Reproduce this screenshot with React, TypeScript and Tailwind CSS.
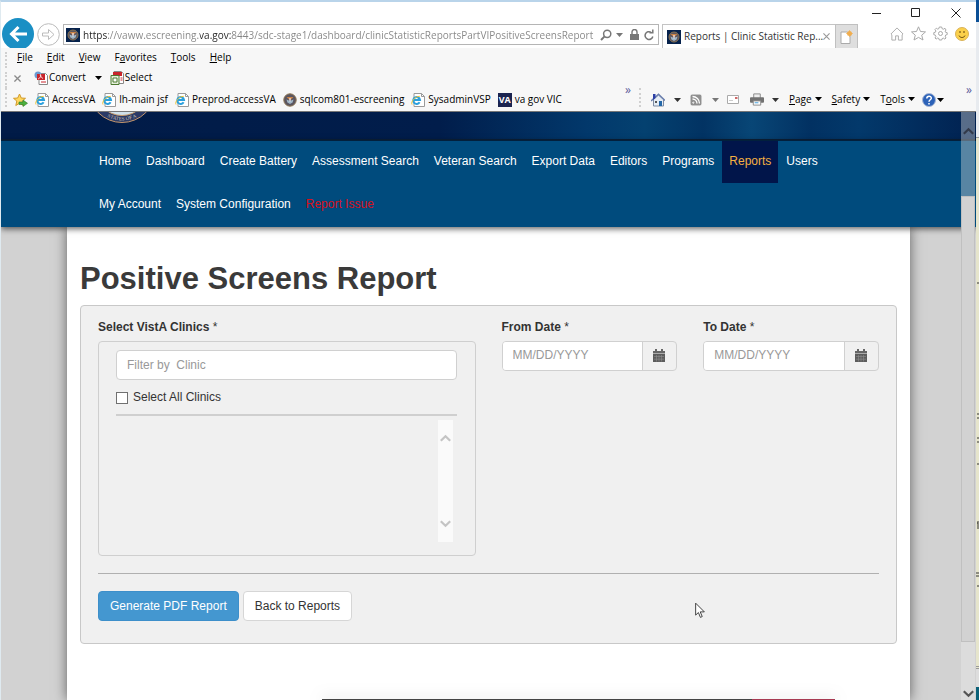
import React from "react";

const NAV_LINKS = [
  "Home",
  "Dashboard",
  "Create Battery",
  "Assessment Search",
  "Veteran Search",
  "Export Data",
  "Editors",
  "Programs",
  "Reports",
  "Users",
  "My Account",
  "System Configuration",
  "Report Issue",
];

function Caret({ className = "" }: { className?: string }) {
  return (
    <svg viewBox="0 0 7 4" className={`h-1 w-[7px] shrink-0 ${className}`} fill="currentColor" aria-hidden="true">
      <path d="M0 0h7L3.5 4z" />
    </svg>
  );
}

function Seal({ square = false }: { square?: boolean }) {
  return (
    <svg viewBox="0 0 14 14" className="size-[14px] shrink-0" aria-hidden="true">
      {square && <rect width="14" height="14" fill="#06224c" />}
      <circle cx="7" cy="7" r={square ? 5 : 6.2} fill="#5a5560" stroke="#8b7452" />
      <path d="M3.500 6.500 7 8l3.500-1.500L9.600 9.500 7 11 4.400 9.500z" fill="#9fb6c6" />
      <path d="M3.500 4h7L7 7.500z" fill="#c98245" />
      <path d="M6.400 5h1.200v3.500H6.400z" fill="#eef" />
    </svg>
  );
}

function IePage() {
  return (
    <svg viewBox="0 0 14 14" className="size-[14px] shrink-0" aria-hidden="true">
      <path d="M3 .5h7.500L13.500 3.500v10H3z" fill="#fff" stroke="#9a9a9a" />
      <path d="M10.500.5v3h3" fill="none" stroke="#9a9a9a" />
      <path d="M8.600 9.200A3.400 3.400 0 1 1 9 7H2.800" fill="none" stroke="#2aa0de" strokeWidth="2" />
      <path d="M1 11.500C-.5 9 4 3.200 8.800 3.300" fill="none" stroke="#f1c232" strokeWidth="1" />
    </svg>
  );
}

function Favorite({ icon, children }: { icon: React.ReactNode; children: React.ReactNode }) {
  return (
    <a href="#favorite" className="flex items-center gap-[3px] whitespace-nowrap">
      {icon}
      {children}
    </a>
  );
}

function Grip({ className }: { className: string }) {
  return <span className={`w-0 shrink-0 border-l-2 border-dotted border-[#d0d0d0] ${className}`} />;
}

function AccessText({ text, at }: { text: string; at: number }) {
  return (
    <span>
      {text.slice(0, at)}
      <u className="underline-offset-1">{text[at]}</u>
      {text.slice(at + 1)}
    </span>
  );
}

function TitleBar() {
  return (
    <div className="flex h-[22px] shrink-0 items-center justify-end text-[#222]">
      <button type="button" aria-label="Minimize" className="flex w-[39px] justify-center">
        <svg viewBox="0 0 10 10" className="size-[10px]" stroke="currentColor">
          <path d="M0 5.500h9" />
        </svg>
      </button>
      <button type="button" aria-label="Maximize" className="flex w-[39px] justify-center">
        <svg viewBox="0 0 10 10" className="size-[10px]" stroke="currentColor" fill="none">
          <path d="M.5.500h8v8h-8z" />
        </svg>
      </button>
      <button type="button" aria-label="Close" className="flex w-[41px] justify-center">
        <svg viewBox="0 0 10 10" className="size-[10px]" stroke="currentColor">
          <path d="M.5.500l9 9M9.500.500l-9 9" />
        </svg>
      </button>
    </div>
  );
}

function AddressRow() {
  return (
    <div className="flex h-6 shrink-0 items-start">
      <button type="button" aria-label="Back" className="-mt-[6px] ml-px h-[30px] w-8 shrink-0 overflow-hidden">
        <svg viewBox="0 0 32 30" className="h-[30px] w-8">
          <circle cx="16" cy="16" r="16" fill="#1a8fc4" />
          <path d="M25 16H10M16.500 9 9.500 16l7 7" fill="none" stroke="#fff" strokeWidth="3" />
        </svg>
      </button>
      <button type="button" aria-label="Forward" className="-mt-px ml-[3px] size-[23px] shrink-0">
        <svg viewBox="0 0 23 23" className="size-[23px]" fill="none" stroke="#bcbcbc">
          <circle cx="11.500" cy="11.500" r="10.800" />
          <path d="M5.500 10h6V6.500l5.500 5-5.500 5V13h-6z" />
        </svg>
      </button>
      <form className="ml-[3px] flex h-[21px] min-w-0 flex-1 items-center border border-[#b5b5b5] bg-white pr-1 pl-[2px]">
        <Seal square />
        <input
          aria-label="Address"
          readOnly
          value="https://vaww.escreening.va.gov:8443/sdc-stage1/dashboard/clinicStatisticReportsPartVIPositiveScreensReport"
          className="ml-[3px] h-[19px] min-w-0 flex-1 bg-[linear-gradient(90deg,#222_24px,#858585_24px,#858585_117px,#222_117px,#222_149px,#858585_149px)] bg-clip-text text-transparent outline-none"
        />
        <span className="flex shrink-0 items-center text-[#777]">
          <svg viewBox="0 0 12 12" className="mr-1 size-3" fill="none" stroke="currentColor" strokeWidth="1.500">
            <circle cx="7.200" cy="4.800" r="3.600" />
            <path d="M4.600 7.400 1 11" strokeWidth="2" />
          </svg>
          <Caret className="mr-[7px]" />
          <svg viewBox="0 0 9 11" className="mr-[5px] h-[11px] w-[9px]" fill="currentColor">
            <path d="M0 5h9v6H0z" />
            <path d="M2 5V3a2.500 2.500 0 0 1 5 0v2" fill="none" stroke="currentColor" strokeWidth="1.400" />
          </svg>
          <svg viewBox="0 0 10 12" className="h-3 w-[10px]" fill="none" stroke="currentColor" strokeWidth="1.500">
            <path d="M8.800 7.500A3.900 3.900 0 1 1 7 3.200" />
            <path d="M5.500 3.800h3.300V.5" />
          </svg>
        </span>
      </form>
      <div className="ml-[3px] flex h-6 w-[173px] shrink-0 items-center border-t border-l border-[#c4c4c4] pr-[6px] pl-1">
        <Seal square />
        <span className="ml-[3px] flex-1 whitespace-nowrap text-[#333]">Reports | Clinic Statistic Rep...</span>
        <svg viewBox="0 0 8 8" className="size-[7px] shrink-0" stroke="#999" strokeWidth="1.300">
          <path d="M.5.500l7 7M7.500.500l-7 7" />
        </svg>
      </div>
      <button
        type="button"
        aria-label="New tab"
        className="flex h-6 w-[23px] shrink-0 items-center justify-center border border-b-0 border-[#c0c0c0] bg-[#dedede]"
      >
        <svg viewBox="0 0 13 14" className="h-[14px] w-[13px]">
          <path d="M1 2h6.500L10 5v8.500H1z" fill="#fff" stroke="#aaa" />
          <circle cx="9.500" cy="3.500" r="2.500" fill="#f0ad4e" />
          <path d="M9.500.200v6.600M6.200 3.500h6.600" stroke="#f0ad4e" strokeWidth=".8" />
        </svg>
      </button>
      <div className="mt-[2px] mr-[7px] ml-8 flex shrink-0 items-center gap-[7px]">
        <svg viewBox="0 0 15 15" className="size-[14px]" fill="none" stroke="#a9a9a9">
          <path d="M1 7.500 7.500 1 14 7.500l-1 1V14H9V9.500H6V14H2V8.500z" />
        </svg>
        <svg viewBox="0 0 15 15" className="size-[15px]" fill="none" stroke="#a9a9a9">
          <path d="M7.500.800 9.500 5.500l5 .4-3.800 3.300L12 14 7.500 11.400 3 14l1.300-4.800L.5 5.900l5-.4z" />
        </svg>
        <svg viewBox="0 0 15 15" className="size-[15px]" fill="none" stroke="#a9a9a9">
          <path d="M6.300 1h2.400l.4 1.700 1.300.5L12 2.300 13 4l-.8 1.200.5 1.200 1.500.3v1.900l-1.500.4-.5 1.200L13 12l-1.200 1.100-1.500-1-1.200.5L8.700 14H6.300l-.4-1.500-1.200-.5-1.500 1L2 12l.9-1.600-.5-1.200L.8 8.700V6.600l1.600-.4.5-1.200L2 3.500l1.300-1.300 1.400.9 1.200-.5z" />
          <circle cx="7.500" cy="7.500" r="2" />
        </svg>
        <svg viewBox="0 0 14 14" className="size-[14px]">
          <circle cx="7" cy="7" r="6.500" fill="#fbd04b" stroke="#d9b25a" />
          <path d="M4 8.500a3.200 3.200 0 0 0 6 0" fill="none" stroke="#7a5b16" />
          <path d="M5 4v2M9 4v2" stroke="#7a5b16" strokeWidth="1.200" />
        </svg>
      </div>
    </div>
  );
}

function BrowserBars() {
  return (
    <div className="shrink-0 border-b border-[#777] bg-[#f7f7f7] text-black">
      <div className="flex h-5 items-stretch">
        <Grip className="mt-1 ml-1" />
        <div className="ml-[3px] flex items-center">
          {[
            { text: "File", at: 0 },
            { text: "Edit", at: 0 },
            { text: "View", at: 0 },
            { text: "Favorites", at: 1 },
            { text: "Tools", at: 0 },
            { text: "Help", at: 0 },
          ].map((m) => (
            <button key={m.text} type="button" className="px-[7px]">
              <AccessText {...m} />
            </button>
          ))}
        </div>
      </div>
      <div className="flex h-5 items-stretch">
        <Grip className="mt-1 ml-1" />
        <div className="flex items-center">
          <svg viewBox="0 0 8 8" className="ml-[7px] size-[7px]" stroke="#8a8a8a" strokeWidth="1.500">
            <path d="M.5.500l7 7M7.500.500l-7 7" />
          </svg>
          <button type="button" className="ml-[13px] flex items-center gap-px">
            <svg viewBox="0 0 14 14" className="size-[14px]">
              <path d="M5 2.500h6.500l2 2v9H5z" fill="#fff" stroke="#888" />
              <circle cx="4" cy="4" r="3.500" fill="#6c9bd2" />
              <path d="M3 3h8v6H3z" fill="#c9252c" />
              <path d="M4 8c3-1 3-4 2.500-4.500S6 6 9 7.500" fill="none" stroke="#fff" strokeWidth=".8" />
              <path d="M7 11h5" stroke="#c9252c" />
            </svg>
            Convert
          </button>
          <Caret className="mr-[8px] ml-[9px]" />
          <button type="button" className="flex items-center gap-px">
            <svg viewBox="0 0 14 14" className="size-[14px]">
              <path d="M4 .5h7l2.500 2v10H4z" fill="#fff" stroke="#888" />
              <path d="M3 1h9v4H3z" fill="#c9252c" />
              <path d="M1 4.500h8v9H1z" fill="#e5eedb" stroke="#4b7a2f" />
              <path d="M3 7h4v4H3z" fill="#fff" stroke="#4b7a2f" />
              <path d="M10.500 7h2M10.500 9h2" stroke="#c9252c" />
            </svg>
            Select
          </button>
        </div>
      </div>
      <div className="flex h-[23px] items-stretch">
        <Grip className="mb-1 ml-1" />
        <div className="flex min-w-0 flex-1 items-center gap-[7px] pl-[6px]">
          <svg viewBox="0 0 15 14" className="h-[14px] w-[15px] shrink-0">
            <path d="M6.500 1 8.300 5l4.200.3L9.300 8l1 4.500-3.800-2.300L2.800 12.500l1-4.500L.5 5.300 4.700 5z" fill="#ffd75e" stroke="#d19a2a" />
            <path d="M6 9h4V7l4.500 3.300L10 13.500v-2H6z" fill="#4caf3d" stroke="#2d7d2b" strokeWidth=".6" />
          </svg>
          <Favorite icon={<IePage />}>AccessVA</Favorite>
          <Favorite icon={<IePage />}>lh-main jsf</Favorite>
          <Favorite icon={<IePage />}>Preprod-accessVA</Favorite>
          <Favorite icon={<Seal />}>sqlcom801-escreening</Favorite>
          <Favorite icon={<IePage />}>SysadminVSP</Favorite>
          <Favorite
            icon={
              <span className="flex h-[14px] w-[14px] items-center justify-center bg-[#1b2450] text-[9px] font-bold text-white">
                VA
              </span>
            }
          >
            va gov VIC
          </Favorite>
        </div>
        <span className="mr-[8px] text-xs leading-1 text-[#5a5a9a]">»</span>
        <Grip className="mb-1" />
        <div className="flex shrink-0 items-center pl-[10px]">
          <svg viewBox="0 0 14 14" className="size-[14px]">
            <path d="M2.500 6.500 7.500 2l5 4.500v6.500h-10z" fill="#e6edf5" stroke="#7d8ba3" />
            <path d="M0 8 7.500 1.200 14 7.500" fill="none" stroke="#6b7fae" strokeWidth="1.500" />
            <path d="M2 1h2.500v4L2 7z" fill="#2b3fa5" />
            <path d="M8 8h3v5H8z" fill="#2467a8" />
            <path d="M4 8h2v2H4z" fill="#555" />
          </svg>
          <Caret className="ml-[9px] text-[#333]" />
          <svg viewBox="0 0 12 12" className="ml-[9px] size-3" fill="none" stroke="#fff">
            <rect width="12" height="12" rx="2" fill="#8f8f8f" />
            <path d="M2.500 5A4.500 4.500 0 0 1 7 9.500M2.500 2.500a7 7 0 0 1 7 7" strokeWidth="1.300" />
            <circle cx="3.300" cy="8.700" r=".6" />
          </svg>
          <Caret className="ml-[10px] text-[#777]" />
          <svg viewBox="0 0 12 9" className="ml-[8px] h-[9px] w-3">
            <path d="M.5.500h11v8H.5z" fill="#fff" stroke="#aaa" />
            <path d="M8 2h2.500v2H8z" fill="#cf6a6a" />
            <path d="M2 5.500h4" stroke="#ccc" />
          </svg>
          <svg viewBox="0 0 15 13" className="ml-[11px] h-[13px] w-[14px]">
            <path d="M4 .5h7v5H4z" fill="#eee" stroke="#888" />
            <rect y="4" width="15" height="6" rx="1" fill="#727272" />
            <path d="M3.500 8h8v4.500h-8z" fill="#fff" stroke="#888" />
            <path d="M5 10h4" stroke="#3a9ad9" />
          </svg>
          <Caret className="ml-[8px] text-[#333]" />
          {[
            { text: "Page", at: 0 },
            { text: "Safety", at: 0 },
            { text: "Tools", at: 1 },
          ].map((m) => (
            <button key={m.text} type="button" className="ml-[10px] flex items-center gap-[3px]">
              <AccessText {...m} />
              <Caret />
            </button>
          ))}
          <button type="button" aria-label="Help" className="ml-[7px] flex items-center gap-px">
            <svg viewBox="0 0 14 14" className="size-[14px]">
              <circle cx="7" cy="7" r="6.500" fill="#2c62b8" stroke="#a7b6d4" />
              <path d="M4.800 5.500C4.800 2.300 9.500 2.500 9.300 5.300 9.200 6.800 7 6.800 7 8.800M7 10v1.500" fill="none" stroke="#fff" strokeWidth="1.500" />
            </svg>
            <Caret />
          </button>
        </div>
        <span className="mr-1 ml-[22px] text-xs leading-1 text-[#5a5a9a]">»</span>
      </div>
    </div>
  );
}

function Banner() {
  return (
    <div className="h-7 shrink-0 overflow-hidden border-b border-[#0c2038] bg-[linear-gradient(90deg,#011b47_0%,#011d4b_45%,#02386b_60%,#044170_66%,#023363_72%,#084676_77%,#023162_83%,#03396b_88%,#012150_100%)] pl-[92px]">
      <svg viewBox="0 0 58 11" className="h-[11px] w-[58px]" aria-hidden="true">
        <defs>
          <path id="seal-rim" d="M-1.500-23A30.500 30.500 0 0 0 59.500-23" />
        </defs>
        <circle cx="29" cy="-23" r="33.500" fill="#2b3a66" stroke="#c4966c" />
        <circle cx="29" cy="-23" r="26.500" fill="#cfe0ea" stroke="#c79a68" />
        <text fill="#d8cdbb" dy="1" className="font-[Liberation_Serif,serif] text-[5px]">
          <textPath href="#seal-rim" startOffset="50%" textAnchor="middle">
            STATES OF A
          </textPath>
        </text>
      </svg>
    </div>
  );
}

function SiteNav() {
  return (
    <nav className="shrink-0 border-t border-[#02203c] bg-[#004b7d] px-[91px] pb-px text-white shadow-[0_2px_6px_rgba(0,0,0,0.6)]">
      <ul className="flex flex-wrap gap-x-px gap-y-px">
        {NAV_LINKS.map((label) => (
          <li key={label}>
            <a
              href="#nav"
              className={`block px-[7px] pt-3 pb-[14px] leading-4 ${
                label === "Reports" ? "bg-[#01154a] text-[#f5b042]" : label === "Report Issue" ? "text-[#d8101c]" : ""
              }`}
            >
              {label}
            </a>
          </li>
        ))}
      </ul>
    </nav>
  );
}

function CalendarIcon() {
  return (
    <svg viewBox="0 0 12 13" className="h-[13px] w-3" aria-hidden="true">
      <path d="M0 2h12v2.500H0zM2 0h2v3H2zM8 0h2v3H8z" fill="#666" />
      <path d="M0 5h12v8H0z" fill="#5c5c5c" />
      <path d="M1 7.500h10M1 10.200h10M3.500 6v6.500M6 6v6.500M8.500 6v6.500" stroke="#8d8d8d" strokeWidth=".6" />
    </svg>
  );
}

function DateField({ id, label }: { id: string; label: string }) {
  return (
    <div>
      <label htmlFor={id} className="block leading-4">
        <b>{label}</b> *
      </label>
      <div className="mt-[6px] flex h-[30px] rounded border border-[#d0d0d0]">
        <input
          id={id}
          placeholder="MM/DD/YYYY"
          className="min-w-0 flex-1 rounded-l-[3px] bg-white px-[10px] pb-[2px] outline-none placeholder:text-[#999]"
        />
        <button
          type="button"
          aria-label={`Open ${label} calendar`}
          className="flex w-[34px] items-center justify-center border-l border-[#d0d0d0] pr-px pb-[2px]"
        >
          <CalendarIcon />
        </button>
      </div>
    </div>
  );
}

function Chevron({ down = false, className = "" }: { down?: boolean; className?: string }) {
  return (
    <svg viewBox="0 0 11 8" className={`h-2 w-[11px] ${className}`} fill="none" stroke="currentColor" strokeWidth="2.200">
      <path d={down ? "M.8 1.200l4.700 4.600 4.700-4.600" : "M.8 6.800l4.700-4.600 4.700 4.600"} />
    </svg>
  );
}

function ReportForm() {
  return (
    <form className="rounded border border-[#c8c8c8] bg-[#f0f0f0] px-[17px] pt-[13px] pb-[22px]">
      <div className="grid grid-cols-4 gap-[26px]">
        <div className="col-span-2">
          <label htmlFor="clinic-filter" className="block leading-4">
            <b>Select VistA Clinics</b> *
          </label>
          <div className="mt-[6px] rounded border border-[#cfcfcf] pt-2 pr-[18px] pb-[13px] pl-[17px]">
            <input
              id="clinic-filter"
              placeholder="Filter by  Clinic"
              className="block h-[30px] w-full rounded border border-[#d0d0d0] bg-white px-[10px] pb-px outline-none placeholder:text-[#999]"
            />
            <label className="mt-[9px] flex items-center gap-[5px] leading-4">
              <input type="checkbox" className="mt-[2px] size-3 appearance-none border border-[#707070] bg-white" />
              Select All Clinics
            </label>
            <div className="mt-[9px] border-t-2 border-[#cfcfcf]" />
            <div className="mt-1 flex h-[122px] justify-end pr-1">
              <div className="flex w-[15px] flex-col items-center justify-between bg-[#fafafa] py-[14px] text-[#c4c4c4]">
                <Chevron />
                <Chevron down />
              </div>
            </div>
          </div>
        </div>
        <DateField id="from-date" label="From Date" />
        <DateField id="to-date" label="To Date" />
      </div>
      <hr className="mt-[17px] border-[#b0b0b0]" />
      <div className="mt-[17px] flex gap-1">
        <button type="button" className="h-[30px] rounded border border-[#3d8fca] bg-[#4497d0] px-[11px] pb-px text-white">
          Generate PDF Report
        </button>
        <button type="button" className="h-[30px] rounded border border-[#d6d6d6] bg-white px-[11px] pb-px">
          Back to Reports
        </button>
      </div>
    </form>
  );
}

function PageScrollbar() {
  return (
    <div className="absolute inset-y-0 right-[1px] z-20 flex w-[14px] flex-col items-center bg-[rgba(220,220,220,0.4)]">
      <Chevron className="mt-[15px] text-[#333a4a]" />
      <div className="mt-[61px] w-full flex-1 border border-[#c0c0c0] bg-[#d2d2d2]" />
      <div className="flex h-[58px] w-full items-end justify-center bg-[#dcdcdc]">
        <Chevron down className="mb-[2px] text-[#555]" />
      </div>
    </div>
  );
}

function WindowBehind() {
  return (
    <svg className="h-full w-[3px] shrink-0" aria-hidden="true">
      <rect width="3" height="100%" fill="#e6e5cc" />
      <rect width="3" height="22" fill="#0a4f96" />
      <rect y="22" width="3" height="115" fill="#e8ebef" />
      <path d="M0 137.500h3M0 666.500h3M0 668.500h3" stroke="#999" />
      <rect y="669" width="3" height="18" fill="#ddd" />
      <rect y="687" width="3" height="13" fill="#0b6178" />
      <path d="M1 283h2M1 414h2M1 418h2M1 438h2M1 442h2M1 464h2M1 523h1M2 521v8M0 573h3M0 576h3M1 586h2" stroke="#333" />
    </svg>
  );
}

export default function App() {
  return (
    <div className="flex h-screen overflow-hidden font-[Liberation_Sans,Arial,sans-serif] text-xs text-[#333]">
      <div className="flex min-w-0 flex-1 flex-col border-t-2 border-l border-t-[#b9d4ea] border-l-[#dfeaf0] bg-white">
        <header className="shrink-0 font-[Open_Sans,Noto_Sans,sans-serif] text-[10px]">
          <TitleBar />
          <AddressRow />
          <BrowserBars />
        </header>
        <div className="relative flex min-h-0 flex-1 flex-col overflow-hidden bg-[#d2d2d2]">
          <Banner />
          <div className="z-10 flex shrink-0 flex-col">
            <SiteNav />
          </div>
          <main className="mx-[66px] flex flex-1 flex-col bg-white px-[13px] pt-8 shadow-[0_0_12px_rgba(0,0,0,0.55)]">
            <h1 className="mb-[6px] text-[31px] leading-10 font-bold text-[#3a3a3a]">Positive Screens Report</h1>
            <ReportForm />
            <div className="mt-auto mr-[62px] ml-[242px] flex h-px bg-[#444] shadow-[0_0_14px_rgba(0,0,0,0.5)]">
              <span className="ml-auto w-[83px] bg-[#a83a52]" />
            </div>
          </main>
          <PageScrollbar />
          <svg viewBox="0 0 12 18" className="absolute bottom-[81px] left-[694px] h-[17px] w-[11px]" aria-hidden="true">
            <path d="M.7 1v13l3-2.800 2.200 5.300 2-.9L5.700 10.500h4.500z" fill="#fff" stroke="#333" />
          </svg>
        </div>
      </div>
      <WindowBehind />
    </div>
  );
}
